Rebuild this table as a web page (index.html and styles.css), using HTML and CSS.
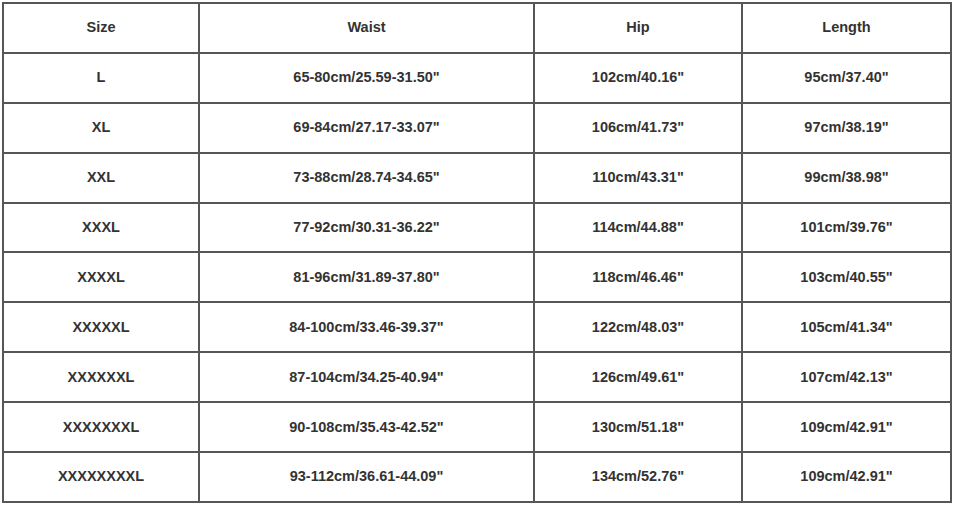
FILE: index.html
```html
<!DOCTYPE html>
<html>
<head>
<meta charset="utf-8">
<link rel="stylesheet" href="styles.css">
</head>
<body>
<table class="size-table">
  <colgroup>
    <col class="c1"><col class="c2"><col class="c3"><col class="c4">
  </colgroup>
  <tr><td>Size</td><td>Waist</td><td>Hip</td><td>Length</td></tr>
  <tr><td>L</td><td>65-80cm/25.59-31.50"</td><td>102cm/40.16"</td><td>95cm/37.40"</td></tr>
  <tr><td>XL</td><td>69-84cm/27.17-33.07"</td><td>106cm/41.73"</td><td>97cm/38.19"</td></tr>
  <tr><td>XXL</td><td>73-88cm/28.74-34.65"</td><td>110cm/43.31"</td><td>99cm/38.98"</td></tr>
  <tr><td>XXXL</td><td>77-92cm/30.31-36.22"</td><td>114cm/44.88"</td><td>101cm/39.76"</td></tr>
  <tr><td>XXXXL</td><td>81-96cm/31.89-37.80"</td><td>118cm/46.46"</td><td>103cm/40.55"</td></tr>
  <tr><td>XXXXXL</td><td>84-100cm/33.46-39.37"</td><td>122cm/48.03"</td><td>105cm/41.34"</td></tr>
  <tr><td>XXXXXXL</td><td>87-104cm/34.25-40.94"</td><td>126cm/49.61"</td><td>107cm/42.13"</td></tr>
  <tr><td>XXXXXXXL</td><td>90-108cm/35.43-42.52"</td><td>130cm/51.18"</td><td>109cm/42.91"</td></tr>
  <tr><td>XXXXXXXXL</td><td>93-112cm/36.61-44.09"</td><td>134cm/52.76"</td><td>109cm/42.91"</td></tr>
</table>
</body>
</html>
```
FILE: styles.css
```css
html, body {
  margin: 0;
  padding: 0;
  background: #ffffff;
}
body {
  font-family: "Liberation Sans", Arial, sans-serif;
}
.size-table {
  margin: 2px 0 0 2px;
  border-spacing: 2px;
  background: #565656;
  table-layout: fixed;
  width: 950px;
}
.c1 { width: 194px; }
.c2 { width: 333px; }
.c3 { width: 206px; }
.c4 { width: 207px; }
.size-table td {
  box-sizing: border-box;
  background: #ffffff;
  height: 47.9px;
  padding: 0 0 1px 0;
  text-align: center;
  vertical-align: middle;
  font-size: 14.5px;
  font-weight: bold;
  color: #333333;
}
```
